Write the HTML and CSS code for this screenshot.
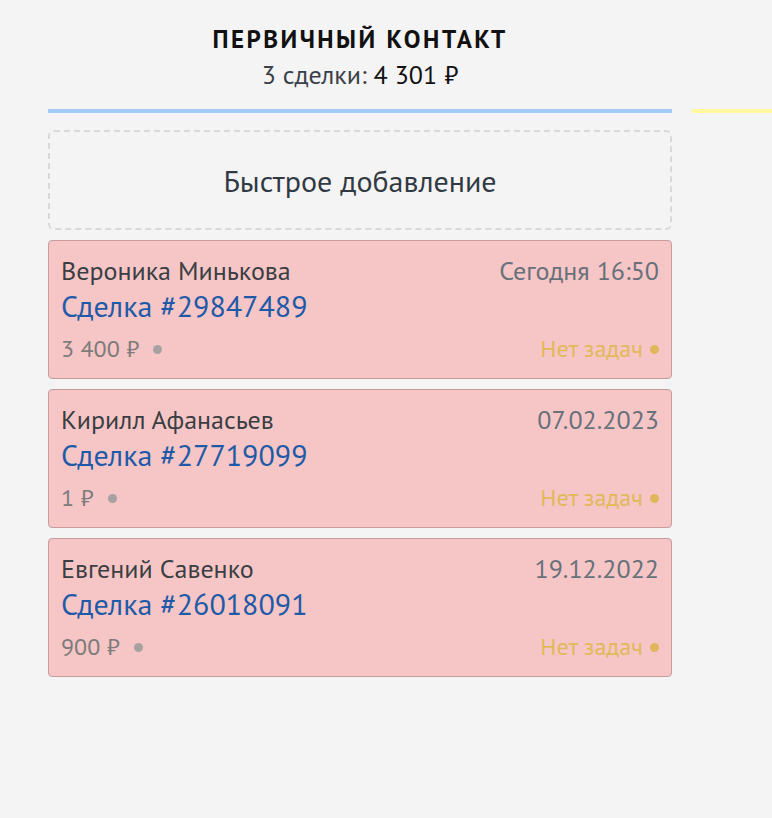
FILE: index.html
```html
<!DOCTYPE html>
<html lang="ru">
<head>
<meta charset="utf-8">
<link rel="stylesheet" href="styles.css">
</head>
<body>
<div class="board">
  <section class="col">
    <header class="col-head">
      <div class="col-title">ПЕРВИЧНЫЙ КОНТАКТ</div>
      <div class="col-sum">3 сделки: <span class="sum-val">4 301 ₽</span></div>
    </header>
    <div class="col-line blue"></div>
    <div class="quick-add">Быстрое добавление</div>
    <div class="cards">
      <div class="card">
        <div class="row top">
          <span class="name">Вероника Минькова</span>
          <span class="date">Сегодня 16:50</span>
        </div>
        <div class="deal">Сделка #29847489</div>
        <div class="row bottom">
          <span class="price">3 400 ₽ <i class="dot grey"></i></span>
          <span class="tasks">Нет задач <i class="dot yellow"></i></span>
        </div>
      </div>
      <div class="card">
        <div class="row top">
          <span class="name">Кирилл Афанасьев</span>
          <span class="date">07.02.2023</span>
        </div>
        <div class="deal">Сделка #27719099</div>
        <div class="row bottom">
          <span class="price">1 ₽ <i class="dot grey"></i></span>
          <span class="tasks">Нет задач <i class="dot yellow"></i></span>
        </div>
      </div>
      <div class="card">
        <div class="row top">
          <span class="name">Евгений Савенко</span>
          <span class="date">19.12.2022</span>
        </div>
        <div class="deal">Сделка #26018091</div>
        <div class="row bottom">
          <span class="price">900 ₽ <i class="dot grey"></i></span>
          <span class="tasks">Нет задач <i class="dot yellow"></i></span>
        </div>
      </div>
    </div>
  </section>
  <section class="col next">
    <header class="col-head"></header>
    <div class="col-line yellow"></div>
  </section>
</div>
</body>
</html>
```
FILE: styles.css
```css
html, body {
  margin: 0;
  padding: 0;
  background: #f4f4f4;
}
body {
  font-family: "PT Sans", "Noto Sans", "Liberation Sans", sans-serif;
  color: #313942;
  width: 772px;
  height: 818px;
  overflow: hidden;
}
.board {
  display: flex;
  gap: 20px;
  padding-left: 48px;
}
.col {
  width: 624px;
  flex: none;
}
.col.next {
  flex: 1 1 auto;
  width: auto;
  min-width: 0;
}
.col-head {
  height: 109px;
  box-sizing: border-box;
  padding-top: 25px;
  text-align: center;
}
.col-title {
  font-size: 25px;
  font-weight: 700;
  letter-spacing: 2.5px;
  line-height: 28px;
  color: #111;
}
.col-sum {
  margin-top: 7px;
  font-size: 26px;
  line-height: 30px;
  color: #3a4047;
}
.sum-val {
  color: #111;
}
.col-line {
  height: 4px;
}
.col-line.blue { background: #a4cbf8; }
.col-line.yellow { background: #fef99e; }
.quick-add {
  margin-top: 17px;
  height: 100px;
  box-sizing: border-box;
  border: 2px dashed #d9d9d9;
  border-radius: 6px;
  display: flex;
  align-items: center;
  justify-content: center;
  font-size: 30px;
  color: #313942;
}
.cards {
  margin-top: 10px;
  display: flex;
  flex-direction: column;
  gap: 10px;
}
.card {
  height: 139px;
  box-sizing: border-box;
  background: #f6c6c6;
  border: 1px solid #c69c9c;
  border-radius: 4px;
  padding: 15px 12px 0 12px;
}
.row {
  display: flex;
  justify-content: space-between;
  align-items: center;
}
.row.top {
  font-size: 26px;
  line-height: 30px;
}
.name { color: #3a3e43; }
.date { color: #68707a; }
.deal {
  margin-top: 3px;
  font-size: 30px;
  line-height: 34px;
  color: #1f5aa8;
}
.row.bottom {
  margin-top: 12px;
  font-size: 24px;
  line-height: 28px;
}
.price {
  color: #7e7b7b;
  display: flex;
  align-items: center;
}
.tasks {
  color: #e1b95b;
  display: flex;
  align-items: center;
}
.dot {
  display: inline-block;
  width: 9px;
  height: 9px;
  border-radius: 50%;
}
.dot.grey { background: #a8a1a1; margin-left: 14px; }
.dot.yellow { background: #e0b65a; margin-left: 7px; }
```
